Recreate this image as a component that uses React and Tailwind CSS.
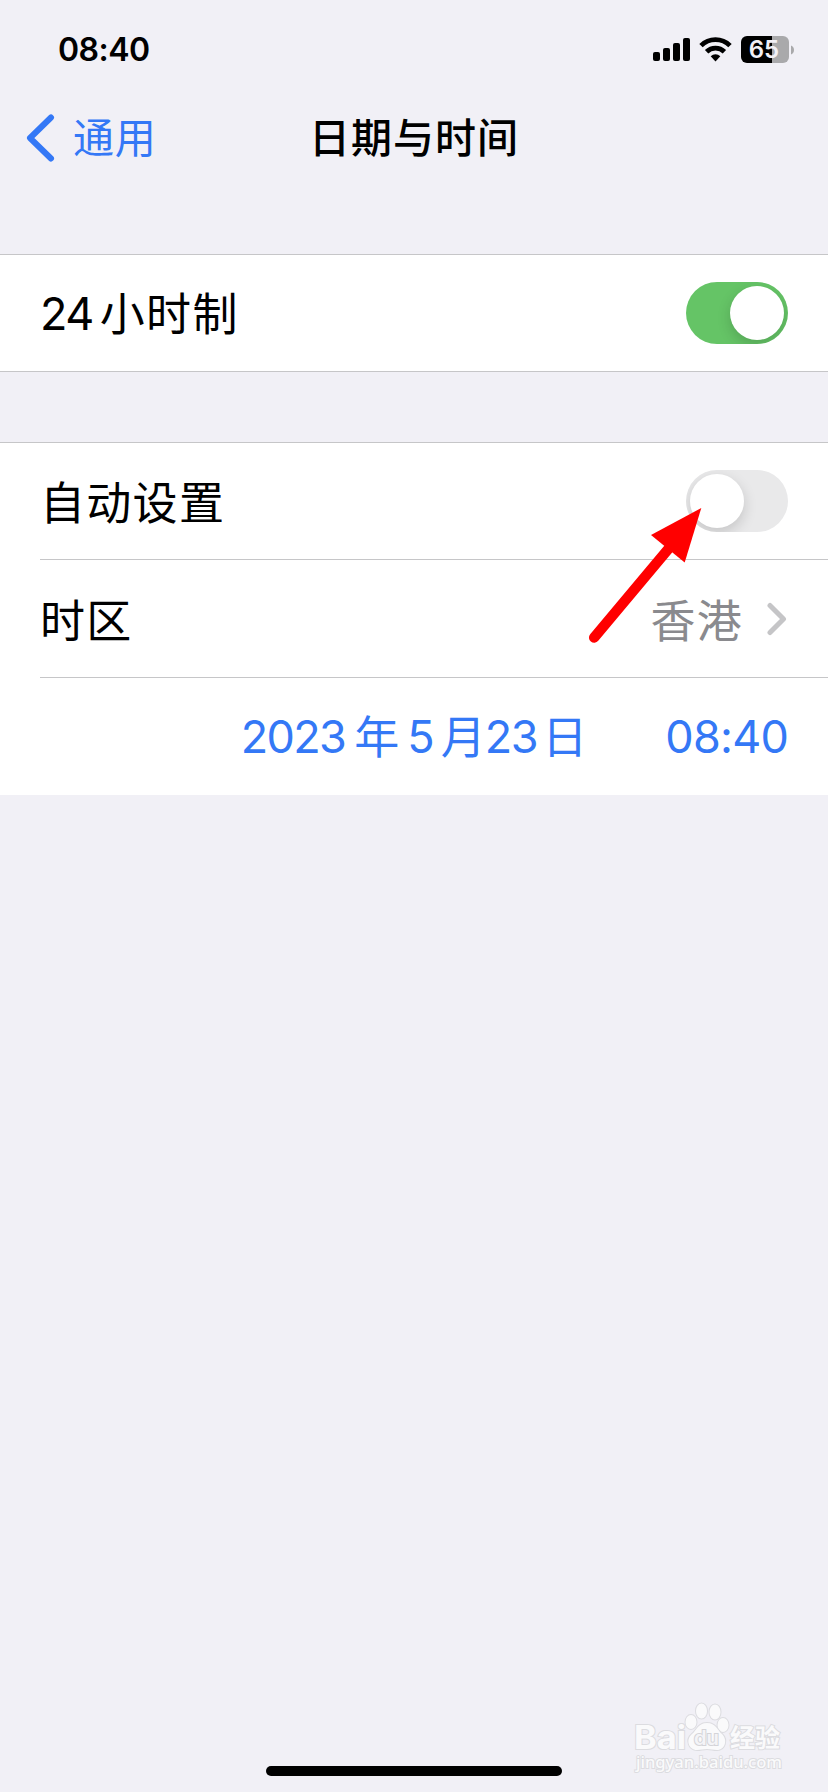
import React from "react";

function StatusBar() {
  return (
    <div className="flex h-[88px] items-center justify-between pt-[11px] pr-[34px] pl-[58px]">
      <span className="text-[32px] leading-none font-semibold tracking-[-0.5px]">08:40</span>
      <div className="flex h-7 items-center">
        <svg width="38" height="28" viewBox="0 0 38 28">
          <rect x="0" y="16" width="7" height="9" rx="2" />
          <rect x="10" y="12" width="7" height="13" rx="2" />
          <rect x="20" y="7" width="7" height="18" rx="2" />
          <rect x="30" y="2" width="7" height="23" rx="2" />
        </svg>
        <svg className="ml-[8px]" width="33" height="28" viewBox="0 0 33 28">
          <g fill="none" stroke="#000" strokeWidth="4.8">
            <path d="M2 9.6a20.6 20.6 0 0 1 29 0" />
            <path d="M7.6 15.8a12.6 12.6 0 0 1 17.8 0" />
          </g>
          <path d="M11.7 20.2a7 7 0 0 1 9.6 0L16.5 25.5z" />
        </svg>
        <div className="ml-[9px] flex h-[27px] w-12 items-center justify-center overflow-hidden rounded-[6px] bg-[linear-gradient(to_right,#000_31px,#a9a9ab_31px)]">
          <span className="pr-[2px] text-[24px] leading-none font-semibold text-[#f1f0f6]">65</span>
        </div>
        <svg className="ml-[2px]" width="3" height="10" viewBox="0 0 3 10">
          <path d="M0 0.5C4 2 4 8 0 9.5z" fill="#a9a9ab" />
        </svg>
      </div>
    </div>
  );
}

function NavBar() {
  return (
    <div className="grid h-[100px] grid-cols-3 items-center">
      <div className="flex items-center pl-[26px] text-[#3478f6]">
        <svg width="29" height="48" viewBox="0 0 29 48" fill="none">
          <path
            d="M25 3.5L4 24L25 44.5"
            stroke="currentColor"
            strokeWidth="6"
            strokeLinecap="round"
            strokeLinejoin="round"
          />
        </svg>
        <span className="ml-[18px] text-[41px] leading-none tracking-[0.8px] whitespace-nowrap">通用</span>
      </div>
      <h1 className="text-center text-[41px] leading-none font-medium tracking-[1px] whitespace-nowrap">
        日期与时间
      </h1>
    </div>
  );
}

function Toggle({ on }) {
  return (
    <div
      className={
        "flex h-[62px] w-[102px] items-center overflow-hidden rounded-full px-1 " +
        (on ? "justify-end bg-[#65c466]" : "justify-start bg-[#e9e9ea]")
      }
    >
      <div className="size-[54px] rounded-full bg-white shadow-[0_5px_14px_rgba(0,0,0,0.16)]" />
    </div>
  );
}

function Arrow() {
  return (
    <svg
      className="absolute top-[63px] left-[586px]"
      width="120"
      height="142"
      viewBox="586 506 120 142"
    >
      <path d="M594.2 637.5L670 547" stroke="#f00" strokeWidth="10.5" strokeLinecap="round" />
      <path d="M701.3 508L651 535L684.7 562.5z" fill="#f00" />
    </svg>
  );
}

function Watermark() {
  return (
    <svg
      className="absolute right-0 bottom-0"
      width="210"
      height="112"
      viewBox="0 0 210 112"
      fill="#fafafb"
      stroke="#dcdce0"
      strokeWidth="2"
      paintOrder="stroke"
    >
      <text
        x="16"
        y="69"
        fontSize="33"
        fontWeight="700"
        textLength="52"
        lengthAdjust="spacingAndGlyphs"
        fontFamily="Inter, sans-serif"
      >
        Bai
      </text>
      <ellipse cx="73" cy="42" rx="5.5" ry="7" />
      <ellipse cx="83.5" cy="31" rx="5.5" ry="7.5" />
      <ellipse cx="97" cy="32" rx="5.5" ry="7.5" />
      <ellipse cx="105" cy="45" rx="5.5" ry="7" />
      <path d="M89 43C80 43 79 50 74 54C67 60 71 70 79 70C83 70 85 69 89 69C93 69 95 70 99 70C107 70 110 60 104 54C99 50 98 43 89 43z" />
      <text
        x="76"
        y="65"
        fontSize="20"
        fontWeight="600"
        fill="#f4f4f7"
        stroke="#d4d4d8"
        textLength="25"
        lengthAdjust="spacingAndGlyphs"
        fontFamily="Inter, sans-serif"
      >
        du
      </text>
      <text x="112" y="67" fontSize="25" fontWeight="700" textLength="50" fontFamily="'Noto Sans CJK SC', sans-serif">
        经验
      </text>
      <text
        x="18"
        y="88"
        fontSize="17"
        fontWeight="500"
        textLength="146"
        lengthAdjust="spacingAndGlyphs"
        fontFamily="'Noto Sans', sans-serif"
      >
        jingyan.baidu.com
      </text>
    </svg>
  );
}

export default function App() {
  return (
    <div className="relative flex h-[1792px] w-[828px] flex-col overflow-hidden bg-[#f1f0f6] font-[Inter,'Noto_Sans_CJK_SC',sans-serif] text-black">
      <StatusBar />
      <NavBar />

      <section className="mt-[66px] flex h-[118px] items-center justify-between border-y border-[#c6c6c8] bg-white pr-10 pl-10">
        <div className="flex items-center text-[45px] leading-none">
          <span className="tracking-[-1.5px]">24</span>
          <span className="ml-[7px] pt-[3px] tracking-[1.3px]">小时制</span>
        </div>
        <Toggle on />
      </section>

      <section className="relative mt-[70px] border-t border-[#c6c6c8] bg-white pl-10 text-[45px] leading-none">
        <div className="flex h-[117px] items-center justify-between border-b border-[#c6c6c8] pr-10">
          <span className="pt-1 tracking-[1.3px]">自动设置</span>
          <Toggle />
        </div>
        <div className="flex h-[118px] items-center justify-between border-b border-[#c6c6c8] pr-[41px]">
          <span className="pt-[5px] tracking-[1.3px]">时区</span>
          <div className="flex items-center text-[#8a8a8e]">
            <span className="pt-[5px] tracking-[1.3px]">香港</span>
            <svg className="ml-6" width="20" height="34" viewBox="0 0 20 34" fill="none">
              <path
                d="M3 3.5L16.5 17L3 30.5"
                stroke="#c5c5c7"
                strokeWidth="5"
                strokeLinecap="round"
                strokeLinejoin="round"
              />
            </svg>
          </div>
        </div>
        <div className="flex h-[117px] items-center justify-end pr-10 text-[#3478f6]">
          <div className="flex items-center">
            <span className="tracking-[-1.6px]">2023</span>
            <span className="ml-[9px] pt-[2px]">年</span>
            <span className="ml-[8px]">5</span>
            <span className="ml-[6px] pt-[2px]">月</span>
            <span className="-ml-px tracking-[-1.3px]">23</span>
            <span className="ml-[5px] pt-[2px]">日</span>
          </div>
          <span className="ml-[78px] tracking-[-0.8px]">08:40</span>
        </div>
        <Arrow />
      </section>

      <Watermark />
      <div className="mx-auto mt-auto mb-4 h-[10px] w-[296px] rounded-full bg-black" />
    </div>
  );
}
